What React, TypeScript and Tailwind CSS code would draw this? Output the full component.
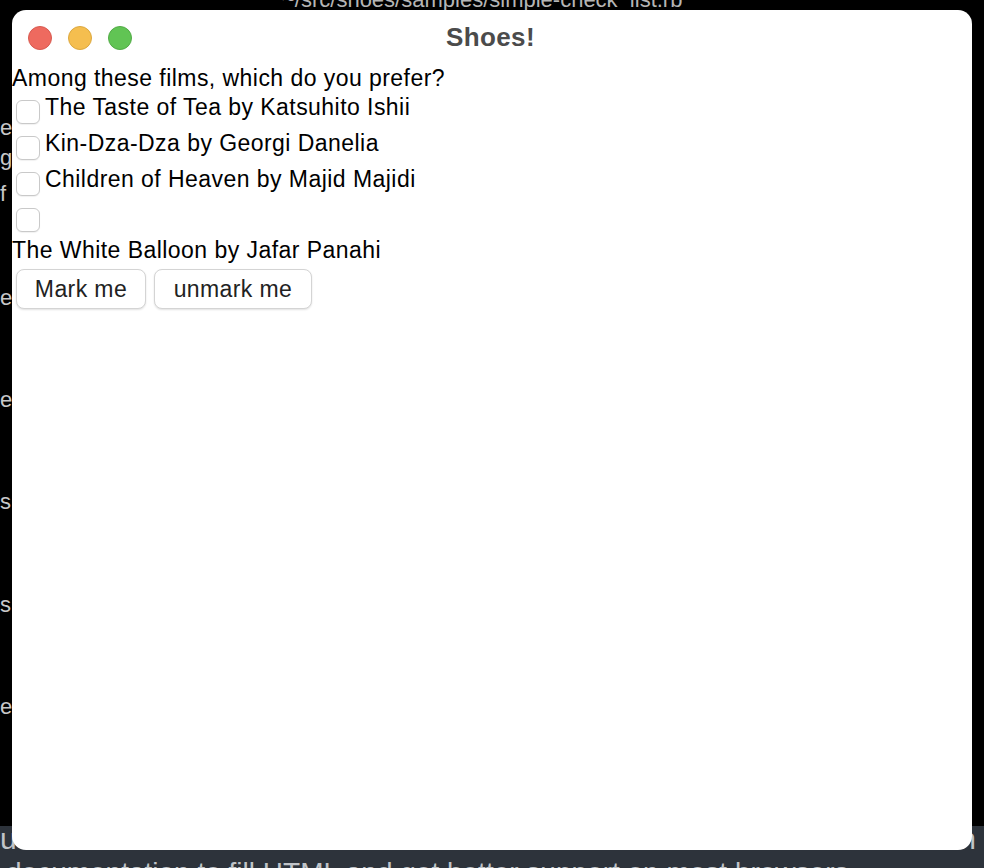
import React from "react";

const films = [
  "The Taste of Tea by Katsuhito Ishii",
  "Kin-Dza-Dza by Georgi Danelia",
  "Children of Heaven by Majid Majidi",
];

function Box() {
  return (
    <div className="w-[24px] h-[24px] shrink-0 rounded-[6px] border border-[#c9c9c9] bg-white shadow-[0_1px_1px_rgba(0,0,0,0.06)]" />
  );
}

export default function App() {
  const sideLetters: [string, number][] = [
    ["e", 116],
    ["g", 146],
    ["f", 182],
    ["e", 286],
    ["e", 388],
    ["s", 490],
    ["s", 593],
    ["e", 695],
  ];
  return (
    <div
      className="relative w-[984px] h-[868px] bg-black overflow-hidden"
      style={{ fontFamily: '"Liberation Sans", Arial, sans-serif' }}
    >
      {/* background fragments */}
      <div className="absolute left-[282px] top-[-17px] text-[22px] text-[#b5b5b5] whitespace-nowrap">
        ~/src/shoes/samples/simple-check_list.rb
      </div>
      {sideLetters.map(([l, t], i) => (
        <div
          key={i}
          className="absolute left-[0px] text-[22px] leading-[24px] text-[#c8c8c8]"
          style={{ top: t }}
        >
          {l}
        </div>
      ))}
      <div className="absolute left-0 top-[826px] w-full h-[42px] bg-[#2d333b]">
        <div className="absolute left-0 top-[-4px] w-full flex justify-between text-[30px] leading-[34px] text-[#c0c4c8] whitespace-nowrap">
          <span>u</span>
          <span className="mr-[8px]">n</span>
        </div>
        <div className="absolute left-[6px] top-[32px] text-[28px] leading-[30px] text-[#c0c4c8] whitespace-nowrap">
          documentation to fill HTML and get better support on most browsers
        </div>
      </div>

      {/* window */}
      <div className="absolute left-[12px] top-[10px] w-[960px] h-[840px] rounded-[14px] bg-white overflow-hidden">
        <div className="relative h-[57px]">
          <div className="absolute left-[16px] top-[16px] flex gap-[16px]">
            <div className="w-[24px] h-[24px] rounded-full bg-[#ee6a5f] border border-[#d85a50]" />
            <div className="w-[24px] h-[24px] rounded-full bg-[#f5be4f] border border-[#dca83f]" />
            <div className="w-[24px] h-[24px] rounded-full bg-[#61c454] border border-[#52ab46]" />
          </div>
          <div className="pt-[12px] pr-[3px] text-center text-[26px] leading-[30px] font-bold text-[#4b4b4b] tracking-[0.4px]">
            Shoes!
          </div>
        </div>

        <div className="text-[23px] leading-[23px] tracking-[0.45px] text-black">
          <div>Among these films, which do you prefer?</div>
          {films.map((f) => (
            <div key={f} className="flex h-[36px]">
              <div className="ml-[4px] mt-[10px]">
                <Box />
              </div>
              <div className="ml-[5px] mt-[6px]">{f}</div>
            </div>
          ))}
          <div className="h-[41px] pt-[10px]">
            <div className="ml-[4px]">
              <Box />
            </div>
          </div>
          <div>The White Balloon by Jafar Panahi</div>
          <div className="flex gap-[8px] ml-[4px] mt-[7px]">
            <button className="h-[40px] w-[130px] rounded-[8px] border border-[#d4d4d4] bg-white text-[#222] text-[23px] tracking-[0.4px] shadow-[0_1px_2px_rgba(0,0,0,0.12)]">
              Mark me
            </button>
            <button className="h-[40px] w-[158px] rounded-[8px] border border-[#d4d4d4] bg-white text-[#222] text-[23px] tracking-[0.4px] shadow-[0_1px_2px_rgba(0,0,0,0.12)]">
              unmark me
            </button>
          </div>
        </div>
      </div>
    </div>
  );
}
